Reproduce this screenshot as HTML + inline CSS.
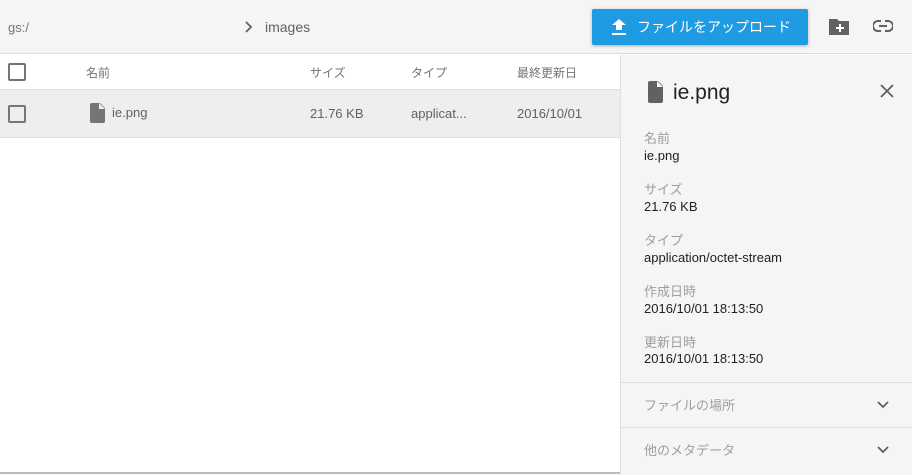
<!DOCTYPE html>
<html><head><meta charset="utf-8"><style>
*{margin:0;padding:0;box-sizing:border-box}
body{width:912px;height:475px;overflow:hidden;background:#fff;font-family:"Liberation Sans","Noto Sans CJK JP",sans-serif;position:relative;color:#212121}
.a{position:absolute;white-space:nowrap}
.top{left:0;top:0;width:912px;height:54px;background:#f5f5f5;border-bottom:1px solid #ddd}
.btn{left:592px;top:9px;width:216px;height:36px;background:#1e9be2;border-radius:2px;box-shadow:0 1px 3px rgba(0,0,0,.3);color:#fff;font-size:14px;line-height:36px}
.hdr{left:0;top:55px;width:620px;height:35px;border-bottom:1px solid #e0e0e0;font-size:12px;color:#757575}
.row{left:0;top:90px;width:620px;height:48px;background:#eee;border-bottom:1px solid #ddd;font-size:13px;color:#616161}
.cb{position:absolute;width:18px;height:18px;border:2px solid #757575;border-radius:2px}
.side{left:620px;top:55px;width:292px;height:420px;background:#f5f5f5;border-left:1px solid #e0e0e0}
.lbl{font-size:13px;color:#9e9e9e}
.val{font-size:13px;color:#212121}
.sec{left:0;width:292px;height:45px;border-top:1px solid #ddd;font-size:13px;color:#9e9e9e}
</style></head><body>
<div class="a top">
 <div class="a" style="left:8px;top:20px;font-size:13px;color:#757575">gs:/</div>
 <svg class="a" style="left:243px;top:20px" width="10" height="14" viewBox="0 0 10 14"><path d="M3 2l5 5-5 5" fill="none" stroke="#616161" stroke-width="1.8"/></svg>
 <div class="a" style="left:265px;top:19px;font-size:14px;color:#616161">images</div>
 <div class="a btn"><svg class="a" style="left:20px;top:10px" width="14" height="17" viewBox="0 0 14 17"><path d="M4 11V6H0l7-6 7 6h-4v5z M0 14h14v2H0z" fill="#fff"/></svg><span class="a" style="left:45px">ファイルをアップロード</span></div>
 <svg class="a" style="left:829px;top:17px" width="22" height="20" viewBox="0 0 22 20"><path d="M0 2h8l2 2h10v14H0z" fill="#616161"/><path d="M11 7v8M7 11h8" stroke="#fff" stroke-width="2"/></svg>
 <svg class="a" style="left:873px;top:19px" width="20" height="14" viewBox="0 0 20 14"><path d="M8 2H5a5 5 0 000 10h3M12 2h3a5 5 0 010 10h-3M6 7h8" fill="none" stroke="#616161" stroke-width="2"/></svg>
</div>
<div class="a hdr">
 <div class="cb" style="left:8px;top:8px"></div>
 <div class="a" style="left:86px;top:9px">名前</div>
 <div class="a" style="left:310px;top:9px">サイズ</div>
 <div class="a" style="left:411px;top:9px">タイプ</div>
 <div class="a" style="left:517px;top:9px">最終更新日</div>
</div>
<div class="a row">
 <div class="cb" style="left:8px;top:15px"></div>
 <svg class="a" style="left:90px;top:13px" width="15" height="20" viewBox="0 0 15 20"><path d="M2 0h8l5 5v13a2 2 0 01-2 2H2a2 2 0 01-2-2V2a2 2 0 012-2z" fill="#757575"/><path d="M9 0v6h6" fill="#eee"/></svg>
 <div class="a" style="left:112px;top:15px">ie.png</div>
 <div class="a" style="left:310px;top:16px">21.76 KB</div>
 <div class="a" style="left:411px;top:16px">applicat...</div>
 <div class="a" style="left:517px;top:16px">2016/10/01</div>
</div>
<div class="a" style="left:0;top:472px;width:620px;height:2px;background:#bbb"></div>
<div class="a side">
 <svg class="a" style="left:27px;top:26px" width="15" height="22" viewBox="0 0 15 22"><path d="M2 0h8l5 5v15a2 2 0 01-2 2H2a2 2 0 01-2-2V2a2 2 0 012-2z" fill="#616161"/><path d="M9 0v6h6" fill="#f5f5f5"/></svg>
 <div class="a" style="left:52px;top:26px;font-size:21px;color:#212121">ie.png</div>
 <svg class="a" style="left:259px;top:29px" width="14" height="14" viewBox="0 0 14 14"><path d="M1 1l12 12M13 1L1 13" stroke="#616161" stroke-width="1.8"/></svg>
 <div class="a lbl" style="left:23px;top:73px">名前</div><div class="a val" style="left:23px;top:93px">ie.png</div>
 <div class="a lbl" style="left:23px;top:124px">サイズ</div><div class="a val" style="left:23px;top:144px">21.76 KB</div>
 <div class="a lbl" style="left:23px;top:175px">タイプ</div><div class="a val" style="left:23px;top:195px">application/octet-stream</div>
 <div class="a lbl" style="left:23px;top:226px">作成日時</div><div class="a val" style="left:23px;top:246px">2016/10/01 18:13:50</div>
 <div class="a lbl" style="left:23px;top:277px">更新日時</div><div class="a val" style="left:23px;top:296px">2016/10/01 18:13:50</div>
 <div class="a sec" style="top:327px"><span class="a" style="left:23px;top:12px">ファイルの場所</span><svg class="a" style="left:256px;top:18px" width="12" height="8" viewBox="0 0 12 8"><path d="M1 1l5 5 5-5" fill="none" stroke="#616161" stroke-width="1.8"/></svg></div>
 <div class="a sec" style="top:372px"><span class="a" style="left:23px;top:12px">他のメタデータ</span><svg class="a" style="left:256px;top:18px" width="12" height="8" viewBox="0 0 12 8"><path d="M1 1l5 5 5-5" fill="none" stroke="#616161" stroke-width="1.8"/></svg></div>
</div>
</body></html>
